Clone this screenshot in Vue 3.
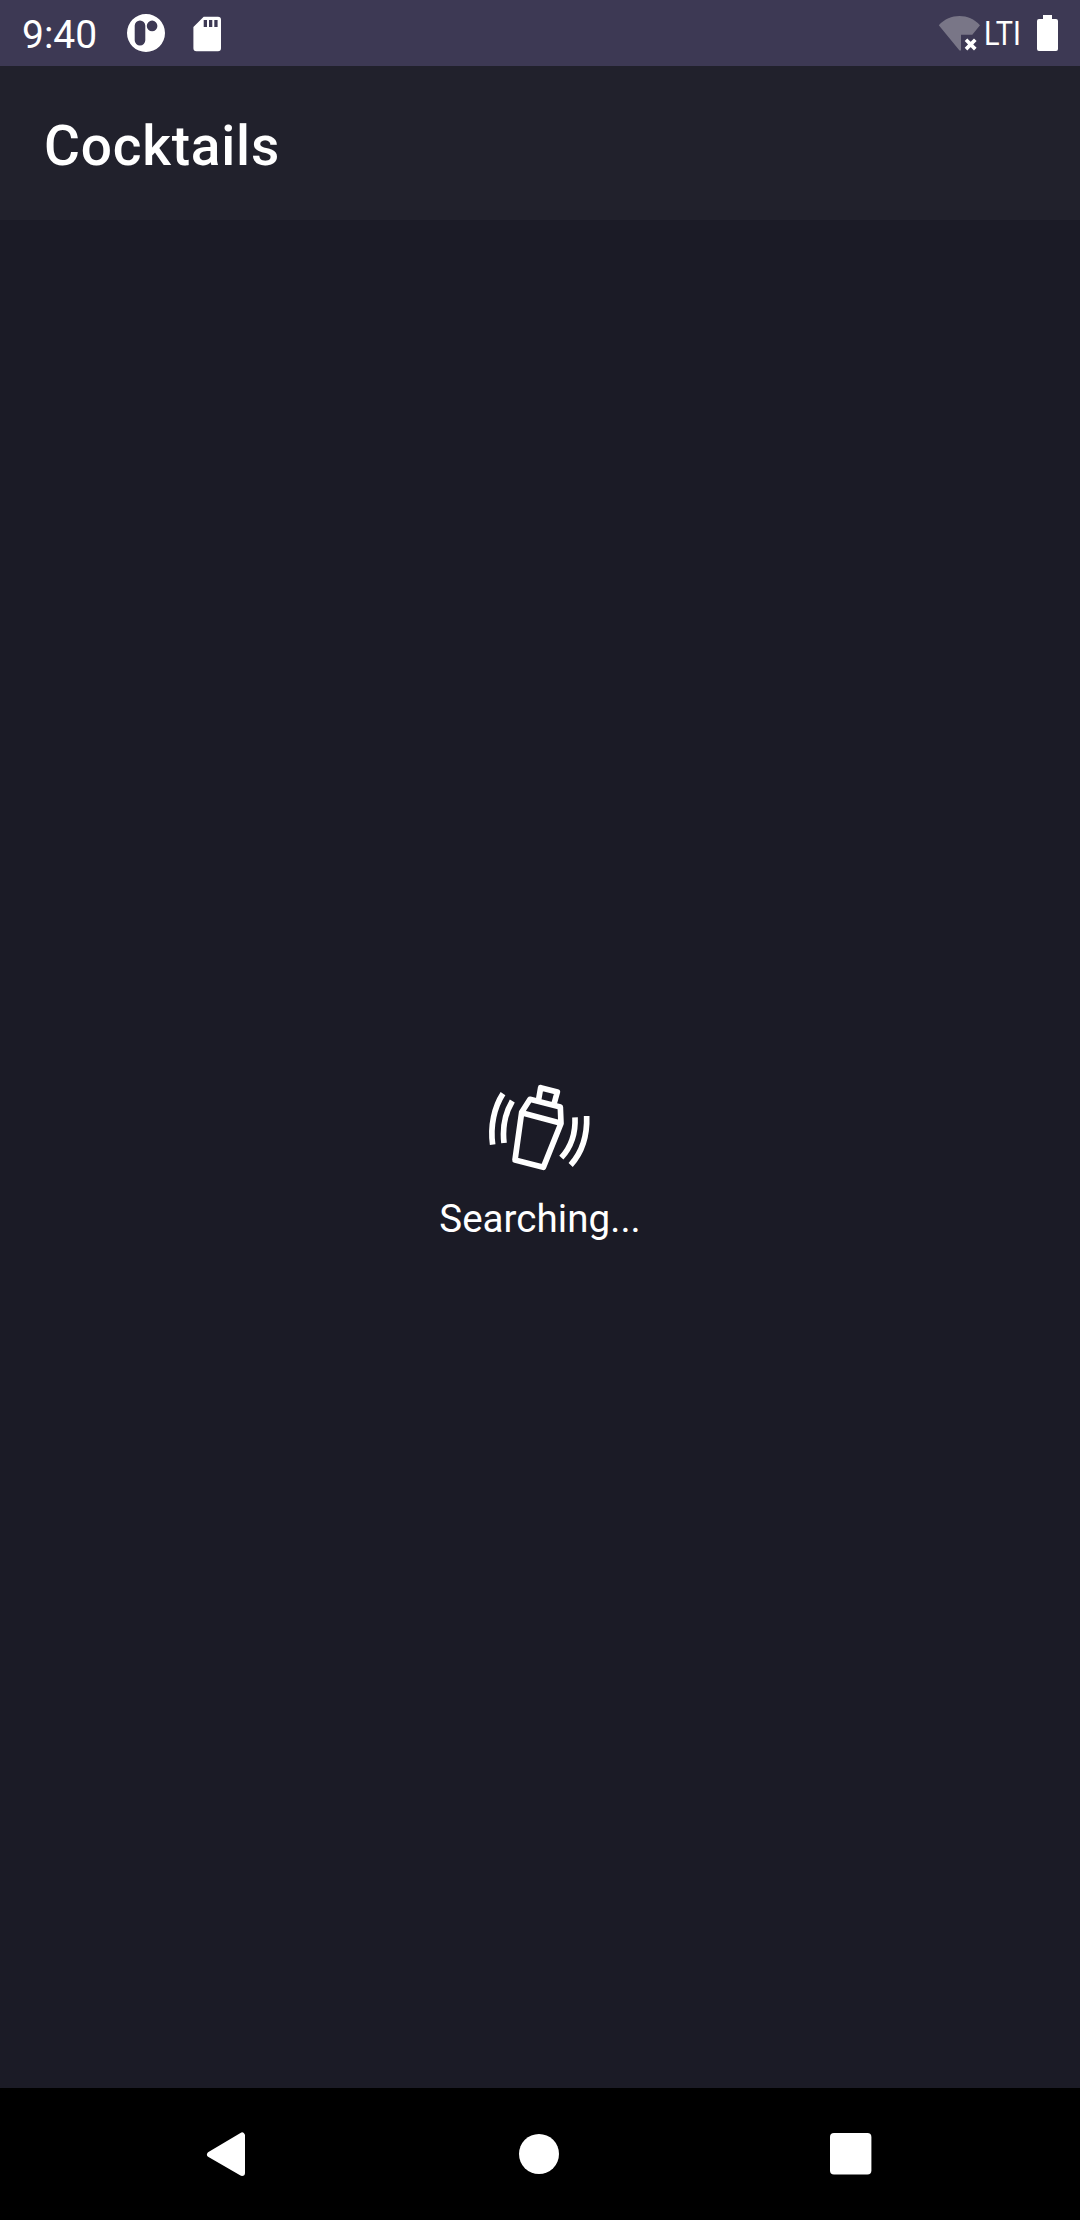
<script setup>
const title = 'Cocktails'
const time = '9:40'
const network = 'LTI'
const message = 'Searching...'
</script>

<template>
  <div class="screen">
    <div class="status">
      <span class="time">{{ time }}</span>
      <svg class="app-icon" width="40" height="40" viewBox="0 0 40 40">
        <path fill="#fff" fill-rule="evenodd" d="M20 1a19 19 0 1 1 0 38a19 19 0 0 1 0-38zM14 7.4a5.3 5.3 0 0 0-5.3 5.3v14.6a5.3 5.3 0 0 0 10.6 0V12.7A5.3 5.3 0 0 0 14 7.4zM26.1 7.6a5.3 5.3 0 1 0 0 10.6a5.3 5.3 0 0 0 0-10.6z" />
      </svg>
      <svg class="card-icon" width="28" height="36" viewBox="0 0 28 36">
        <path fill="#fff" fill-rule="evenodd" d="M10.7.7H25a3 3 0 0 1 3 3v28.500a3 3 0 0 1-3 3H3.400a3 3 0 0 1-3-3V11zM10.700 4v7h3.300V4zM16 4v7h3.300V4zM21.300 4v7h3.300V4z" />
      </svg>
      <div class="signals">
        <svg width="44" height="38" viewBox="0 0 44 38">
          <path fill="#797687" d="M.8 10.200C12-2 31-2 42 10.200L34.300 19.700H23V35.500L21.500 35.500z" />
          <path d="M28 24.800l9.300 9.300M37.300 24.800L28 34.100" stroke="#fff" stroke-width="3.700" />
        </svg>
        <span class="network">{{ network }}</span>
        <svg class="battery" width="21" height="36" viewBox="0 0 21 36">
          <path fill="#fff" d="M6 0h9v4h4a2 2 0 0 1 2 2v28a2 2 0 0 1-2 2H2a2 2 0 0 1-2-2V6a2 2 0 0 1 2-2h4z" />
        </svg>
      </div>
    </div>
    <header class="toolbar"><h1>{{ title }}</h1></header>
    <main class="content">
      <svg width="140" height="110" viewBox="0 0 420 330" fill="none" stroke="#fff">
        <g stroke-width="17" stroke-linejoin="round">
          <path d="M180 88L271 111L273 160L220 292L135 270L155 127z" />
          <path d="M155 128L273 160" />
          <path d="M206 88L212 53L262 66L252 102" />
        </g>
        <g stroke-width="17">
          <path d="M99 71C73 111 60 168 68 224" />
          <path d="M127 93C104 132 97 175 102 219" />
          <path d="M315 142C317 186 304 230 274 263" />
          <path d="M350 138C352 192 338 245 302 285" />
        </g>
      </svg>
      <p>{{ message }}</p>
    </main>
    <nav class="nav">
      <svg width="44" height="48" viewBox="0 0 44 48">
        <path fill="#fff" stroke="#fff" stroke-width="6" stroke-linejoin="round" d="M6 24.500L38 5.500V43z" />
      </svg>
      <svg width="42" height="42" viewBox="0 0 42 42"><circle cx="21" cy="21" r="20" fill="#fff" /></svg>
      <svg width="42" height="42" viewBox="0 0 42 42"><rect width="41.400" height="41.400" rx="4" fill="#fff" /></svg>
    </nav>
  </div>
</template>

<style>
body {
  margin: 0;
  background: #1b1b26;
}
</style>

<style scoped>
.screen {
  width: 1080px;
  height: 2220px;
  display: flex;
  flex-direction: column;
  overflow: hidden;
  background: #1b1b26;
  color: #fff;
  font-family: Roboto, sans-serif;
}
svg {
  display: block;
  flex: none;
}
.status {
  height: 66px;
  flex: none;
  display: flex;
  align-items: flex-start;
  background: #3d3954;
}
.time {
  width: 104px;
  padding: 12px 0 0 22px;
  font-size: 39px;
  line-height: 46px;
}
.app-icon {
  margin-top: 13px;
}
.card-icon {
  margin: 15.500px 0 0 27px;
}
.signals {
  display: flex;
  margin-left: auto;
  padding: 15px 22px 0 0;
}
.network {
  width: 36px;
  margin: -2px 0 0 2px;
  font-size: 34px;
  line-height: 40px;
  white-space: nowrap;
  transform: scaleX(0.85);
  transform-origin: 0 50%;
}
.battery {
  margin-left: 17px;
}
.toolbar {
  height: 154px;
  flex: none;
  display: flex;
  align-items: center;
  padding-left: 44px;
  background: #21212c;
}
h1 {
  margin: 6px 0 0;
  font-size: 55px;
  line-height: 64px;
  font-weight: 500;
  letter-spacing: 0.800px;
}
.content {
  flex: 1;
  display: flex;
  flex-direction: column;
  align-items: center;
  justify-content: center;
  padding-top: 4px;
}
p {
  margin: 16px 0 0;
  font-size: 38.500px;
  line-height: 46px;
  letter-spacing: 0.050px;
}
.nav {
  height: 132px;
  flex: none;
  display: flex;
  align-items: center;
  justify-content: space-between;
  padding: 0 208px 0 204px;
  background: #000;
}
</style>
